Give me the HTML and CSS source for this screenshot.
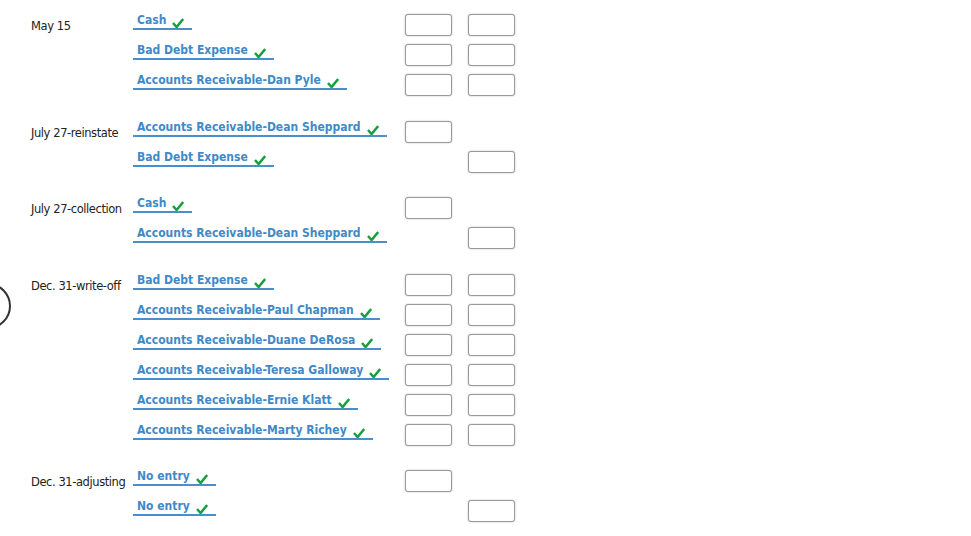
FILE: index.html
```html
<!DOCTYPE html>
<html>
<head>
<meta charset="utf-8">
<link rel="stylesheet" href="styles.css">
</head>
<body>
<div class="ring"></div>
<div class="sheet">
  <div class="group">
    <div class="row">
      <div class="date">May 15</div>
      <div class="acct"><span class="sel"><span class="name">Cash</span><svg class="chk" viewBox="0 0 12 10"><path d="M1 5 L4.6 9 L11.2 1"/></svg></span></div>
      <div class="box"></div><div class="box"></div>
    </div>
    <div class="row">
      <div class="date"></div>
      <div class="acct"><span class="sel"><span class="name">Bad Debt Expense</span><svg class="chk" viewBox="0 0 12 10"><path d="M1 5 L4.6 9 L11.2 1"/></svg></span></div>
      <div class="box"></div><div class="box"></div>
    </div>
    <div class="row">
      <div class="date"></div>
      <div class="acct"><span class="sel"><span class="name">Accounts Receivable-Dan Pyle</span><svg class="chk" viewBox="0 0 12 10"><path d="M1 5 L4.6 9 L11.2 1"/></svg></span></div>
      <div class="box"></div><div class="box"></div>
    </div>
  </div>

  <div class="group g2">
    <div class="row">
      <div class="date">July 27-reinstate</div>
      <div class="acct"><span class="sel"><span class="name">Accounts Receivable-Dean Sheppard</span><svg class="chk" viewBox="0 0 12 10"><path d="M1 5 L4.6 9 L11.2 1"/></svg></span></div>
      <div class="box"></div><div class="nobox"></div>
    </div>
    <div class="row">
      <div class="date"></div>
      <div class="acct"><span class="sel"><span class="name">Bad Debt Expense</span><svg class="chk" viewBox="0 0 12 10"><path d="M1 5 L4.6 9 L11.2 1"/></svg></span></div>
      <div class="nobox"></div><div class="box"></div>
    </div>
  </div>

  <div class="group g3">
    <div class="row">
      <div class="date">July 27-collection</div>
      <div class="acct"><span class="sel"><span class="name">Cash</span><svg class="chk" viewBox="0 0 12 10"><path d="M1 5 L4.6 9 L11.2 1"/></svg></span></div>
      <div class="box"></div><div class="nobox"></div>
    </div>
    <div class="row">
      <div class="date"></div>
      <div class="acct"><span class="sel"><span class="name">Accounts Receivable-Dean Sheppard</span><svg class="chk" viewBox="0 0 12 10"><path d="M1 5 L4.6 9 L11.2 1"/></svg></span></div>
      <div class="nobox"></div><div class="box"></div>
    </div>
  </div>

  <div class="group g4">
    <div class="row">
      <div class="date">Dec. 31-write-off</div>
      <div class="acct"><span class="sel"><span class="name">Bad Debt Expense</span><svg class="chk" viewBox="0 0 12 10"><path d="M1 5 L4.6 9 L11.2 1"/></svg></span></div>
      <div class="box"></div><div class="box"></div>
    </div>
    <div class="row">
      <div class="date"></div>
      <div class="acct"><span class="sel"><span class="name">Accounts Receivable-Paul Chapman</span><svg class="chk" viewBox="0 0 12 10"><path d="M1 5 L4.6 9 L11.2 1"/></svg></span></div>
      <div class="box"></div><div class="box"></div>
    </div>
    <div class="row">
      <div class="date"></div>
      <div class="acct"><span class="sel"><span class="name">Accounts Receivable-Duane DeRosa</span><svg class="chk" viewBox="0 0 12 10"><path d="M1 5 L4.6 9 L11.2 1"/></svg></span></div>
      <div class="box"></div><div class="box"></div>
    </div>
    <div class="row">
      <div class="date"></div>
      <div class="acct"><span class="sel"><span class="name">Accounts Receivable-Teresa Galloway</span><svg class="chk" viewBox="0 0 12 10"><path d="M1 5 L4.6 9 L11.2 1"/></svg></span></div>
      <div class="box"></div><div class="box"></div>
    </div>
    <div class="row">
      <div class="date"></div>
      <div class="acct"><span class="sel"><span class="name">Accounts Receivable-Ernie Klatt</span><svg class="chk" viewBox="0 0 12 10"><path d="M1 5 L4.6 9 L11.2 1"/></svg></span></div>
      <div class="box"></div><div class="box"></div>
    </div>
    <div class="row">
      <div class="date"></div>
      <div class="acct"><span class="sel"><span class="name">Accounts Receivable-Marty Richey</span><svg class="chk" viewBox="0 0 12 10"><path d="M1 5 L4.6 9 L11.2 1"/></svg></span></div>
      <div class="box"></div><div class="box"></div>
    </div>
  </div>

  <div class="group g5">
    <div class="row">
      <div class="date">Dec. 31-adjusting</div>
      <div class="acct"><span class="sel"><span class="name">No entry</span><svg class="chk" viewBox="0 0 12 10"><path d="M1 5 L4.6 9 L11.2 1"/></svg></span></div>
      <div class="box"></div><div class="nobox"></div>
    </div>
    <div class="row">
      <div class="date"></div>
      <div class="acct"><span class="sel"><span class="name">No entry</span><svg class="chk" viewBox="0 0 12 10"><path d="M1 5 L4.6 9 L11.2 1"/></svg></span></div>
      <div class="nobox"></div><div class="box"></div>
    </div>
  </div>
</div>
</body>
</html>
```

FILE: styles.css
```css
html, body {
  margin: 0;
  padding: 0;
  background: #ffffff;
  width: 971px;
  height: 536px;
  overflow: hidden;
}
body {
  font-family: "DejaVu Sans", Verdana, sans-serif;
  color: #222;
  position: relative;
}
.ring {
  position: absolute;
  left: -35px;
  top: 283px;
  width: 42px;
  height: 42px;
  border: 2.5px solid #333;
  border-radius: 50%;
}
.sheet {
  padding: 10px 0 0 31px;
  display: flex;
  flex-direction: column;
}
.group {
  display: flex;
  flex-direction: column;
}
.g2 { margin-top: 17px; }
.g3 { margin-top: 16px; }
.g4 { margin-top: 17px; }
.g5 { margin-top: 16px; }
.row {
  height: 30px;
  display: grid;
  grid-template-columns: 102px 272px 47px 63px;
  align-items: start;
}
.row > :last-child { margin-left: 16px; }
.date {
  font-size: 11.5px;
  letter-spacing: -0.42px;
  line-height: 14px;
  padding-top: 9px;
  color: #222;
  white-space: nowrap;
}
.acct {
  height: 30px;
  display: flex;
  align-items: flex-start;
}
.sel {
  display: flex;
  align-items: flex-end;
  height: 18px;
  padding: 0 8px 0 4px;
  border-bottom: 2px solid #4a8fcb;
}
.name {
  font-family: "DejaVu Sans Condensed", "DejaVu Sans", sans-serif;
  font-weight: bold;
  font-size: 12px;
  letter-spacing: 0;
  line-height: 14px;
  color: #3f89c8;
  padding-bottom: 1px;
  white-space: nowrap;
}
.chk {
  width: 12px;
  height: 10px;
  margin-left: 6px;
  margin-bottom: 0px;
}
.chk path {
  fill: none;
  stroke: #14a03a;
  stroke-width: 2.5;
  stroke-linecap: butt;
  stroke-linejoin: miter;
}
.box {
  margin-top: 4px;
  width: 47px;
  height: 22px;
  box-sizing: border-box;
  border: 1px solid #9a9a9a;
  border-radius: 3px;
  box-shadow: 0 0 1.5px rgba(0,0,0,0.35);
  background: #fff;
}
.nobox {
  width: 47px;
  height: 22px;
}
```
